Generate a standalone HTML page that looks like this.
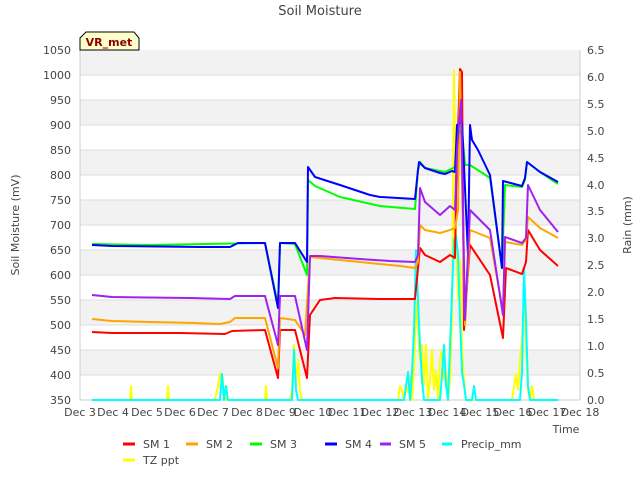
<!DOCTYPE html>
<html><head><style>
body{margin:0;background:#fff;width:640px;height:480px;overflow:hidden;font-family:"Liberation Sans","DejaVu Sans",sans-serif}
svg text{font-family:"DejaVu Sans","Liberation Sans",sans-serif;fill:#444}
</style></head><body>
<svg width="640" height="480" viewBox="0 0 640 480" xmlns="http://www.w3.org/2000/svg">
<text x="320" y="15" font-size="13" text-anchor="middle">Soil Moisture</text>
<g fill="#f2f2f2">
<rect x="80" y="50" width="500" height="25"/><rect x="80" y="100" width="500" height="25"/><rect x="80" y="150" width="500" height="25"/><rect x="80" y="200" width="500" height="25"/><rect x="80" y="250" width="500" height="25"/><rect x="80" y="300" width="500" height="25"/><rect x="80" y="350" width="500" height="25"/>
</g>
<g stroke="#ddd" stroke-width="1">
<line x1="80" y1="75" x2="580" y2="75"/><line x1="80" y1="125" x2="580" y2="125"/><line x1="80" y1="175" x2="580" y2="175"/><line x1="80" y1="225" x2="580" y2="225"/><line x1="80" y1="275" x2="580" y2="275"/><line x1="80" y1="325" x2="580" y2="325"/><line x1="80" y1="375" x2="580" y2="375"/>
<line x1="80" y1="100" x2="580" y2="100"/><line x1="80" y1="150" x2="580" y2="150"/><line x1="80" y1="200" x2="580" y2="200"/><line x1="80" y1="250" x2="580" y2="250"/><line x1="80" y1="300" x2="580" y2="300"/><line x1="80" y1="350" x2="580" y2="350"/>
</g>
<g stroke="#ccc"><line x1="80" y1="50" x2="80" y2="400"/><line x1="80" y1="400" x2="580" y2="400"/><line x1="580" y1="50" x2="580" y2="400"/></g>
<g font-size="11" text-anchor="end">
<text x="71" y="54">1050</text><text x="71" y="79">1000</text><text x="71" y="104">950</text><text x="71" y="129">900</text><text x="71" y="154">850</text><text x="71" y="179">800</text><text x="71" y="204">750</text><text x="71" y="229">700</text><text x="71" y="254">650</text><text x="71" y="279">600</text><text x="71" y="304">550</text><text x="71" y="329">500</text><text x="71" y="354">450</text><text x="71" y="379">400</text><text x="71" y="404">350</text>
</g>
<g font-size="11">
<text x="587" y="54">6.5</text><text x="587" y="81">6.0</text><text x="587" y="108">5.5</text><text x="587" y="135">5.0</text><text x="587" y="162">4.5</text><text x="587" y="189">4.0</text><text x="587" y="215">3.5</text><text x="587" y="242">3.0</text><text x="587" y="269">2.5</text><text x="587" y="296">2.0</text><text x="587" y="323">1.5</text><text x="587" y="350">1.0</text><text x="587" y="377">0.5</text><text x="587" y="404">0.0</text>
</g>
<g font-size="11" text-anchor="middle">
<text x="80" y="416">Dec 3</text><text x="113" y="416">Dec 4</text><text x="147" y="416">Dec 5</text><text x="180" y="416">Dec 6</text><text x="213" y="416">Dec 7</text><text x="247" y="416">Dec 8</text><text x="280" y="416">Dec 9</text><text x="313" y="416">Dec 10</text><text x="347" y="416">Dec 11</text><text x="380" y="416">Dec 12</text><text x="413" y="416">Dec 13</text><text x="447" y="416">Dec 14</text><text x="480" y="416">Dec 15</text><text x="513" y="416">Dec 16</text><text x="547" y="416">Dec 17</text><text x="580" y="416">Dec 18</text>
</g>
<text x="566" y="433" font-size="11" text-anchor="middle">Time</text>
<text transform="translate(19,225) rotate(-90)" font-size="11" text-anchor="middle">Soil Moisture (mV)</text>
<text transform="translate(631,225) rotate(-90)" font-size="11" text-anchor="middle">Rain (mm)</text>
<g fill="none" stroke-width="2" stroke-linejoin="round">
<polyline stroke="#ffff00" points="92,400 130,400 131,386 132,400 167,400 168,386 169,400 215,400 218,386 220,374 222,374 224,390 226,400 265,400 266,386 267,400 290,400 292,390 294,345 296,385 298,360 300,390 302,400 398,400 400,386 402,390 404,400 406,386 408,392 410,376 412,400 414,370 416,300 418,330 420,360 422,345 424,385 426,345 428,400 430,380 432,350 434,390 436,370 438,400 440,360 442,350 444,380 446,370 448,400 450,380 452,320 454,70 456,230 458,300 460,260 462,345 464,380 466,400 512,400 514,386 516,374 518,390 520,360 522,340 524,300 526,345 528,390 530,400 532,386 534,400 558,400"/>
<polyline stroke="#00ffff" points="92,400 220,400 222,374 224,400 226,386 228,400 292,400 294,350 296,390 298,400 404,400 406,386 408,372 410,400 412,372 414,330 416,250 418,300 420,345 422,380 424,400 440,400 442,375 444,345 446,385 448,400 454,240 456,235 458,255 460,320 462,372 464,385 466,400 472,400 474,386 476,400 520,400 522,372 524,268 526,320 528,386 530,400 558,400"/>
<polyline stroke="#ff0000" points="92,332 112,333 180,333 225,334 232,331 265,330 278,378 280,330 295,330 307,378 310,315 320,300 335,298 380,299 415,299 418,268 420,248 425,255 440,262 450,255 455,258 456,195 460,69 462,72 464,330 466,300 470,245 490,275 503,338 506,268 522,274 526,262 528,230 540,250 558,266"/>
<polyline stroke="#ffa500" points="92,319 112,321 150,322 195,323 220,324 230,322 235,318 265,318 278,368 280,318 295,320 305,335 310,257 320,258 360,262 400,266 415,268 418,262 420,225 425,230 440,233 450,230 455,228 458,210 460,72 462,180 465,325 470,230 490,238 503,312 505,242 522,245 526,240 528,217 540,228 558,238"/>
<polyline stroke="#00ff00" points="92,244 150,245 265,243 278,305 280,243 295,244 307,275 308,180 315,186 340,197 380,206 415,209 418,170 420,162 425,168 445,172 455,167 457,135 462,130 465,165 470,165 490,178 502,268 505,185 522,187 525,180 527,162 540,172 558,184"/>
<polyline stroke="#0000ff" points="92,245 112,246 200,247 230,247 238,243 265,243 278,308 280,243 295,243 307,262 308,167 315,177 340,185 370,195 380,197 415,199 418,170 419,162 425,168 440,173 445,174 452,171 455,172 457,125 462,122 468,255 470,125 472,140 478,150 490,175 502,268 503,181 522,186 525,178 527,162 540,172 558,182"/>
<polyline stroke="#a020f0" points="92,295 112,297 190,298 230,299 235,296 265,296 278,345 280,296 295,296 307,350 310,256 320,256 360,259 390,261 415,262 418,255 420,188 425,202 440,215 450,206 455,210 457,150 461,100 465,320 470,210 490,230 503,315 505,237 522,243 526,238 528,185 540,210 558,232"/>
</g>
<path d="M80,50 L80,38 L86,32 L134,32 L139,38 L139,50 Z" fill="#ffffcc" stroke="#000" stroke-width="1"/>
<text x="109" y="46" font-size="11" font-weight="bold" text-anchor="middle" style="fill:#8b0000">VR_met</text>
<g stroke-width="3">
<line x1="123" y1="444" x2="135" y2="444" stroke="#ff0000"/>
<line x1="186" y1="444" x2="198" y2="444" stroke="#ffa500"/>
<line x1="250" y1="444" x2="262" y2="444" stroke="#00ff00"/>
<line x1="325" y1="444" x2="337" y2="444" stroke="#0000ff"/>
<line x1="380" y1="444" x2="391" y2="444" stroke="#a020f0"/>
<line x1="442" y1="444" x2="452" y2="444" stroke="#00ffff"/>
<line x1="123" y1="460" x2="135" y2="460" stroke="#ffff00"/>
</g>
<g font-size="11">
<text x="143" y="448">SM 1</text><text x="206" y="448">SM 2</text><text x="270" y="448">SM 3</text><text x="345" y="448">SM 4</text><text x="399" y="448">SM 5</text><text x="461" y="448">Precip_mm</text><text x="143" y="464">TZ ppt</text>
</g>
</svg>
</body></html>
